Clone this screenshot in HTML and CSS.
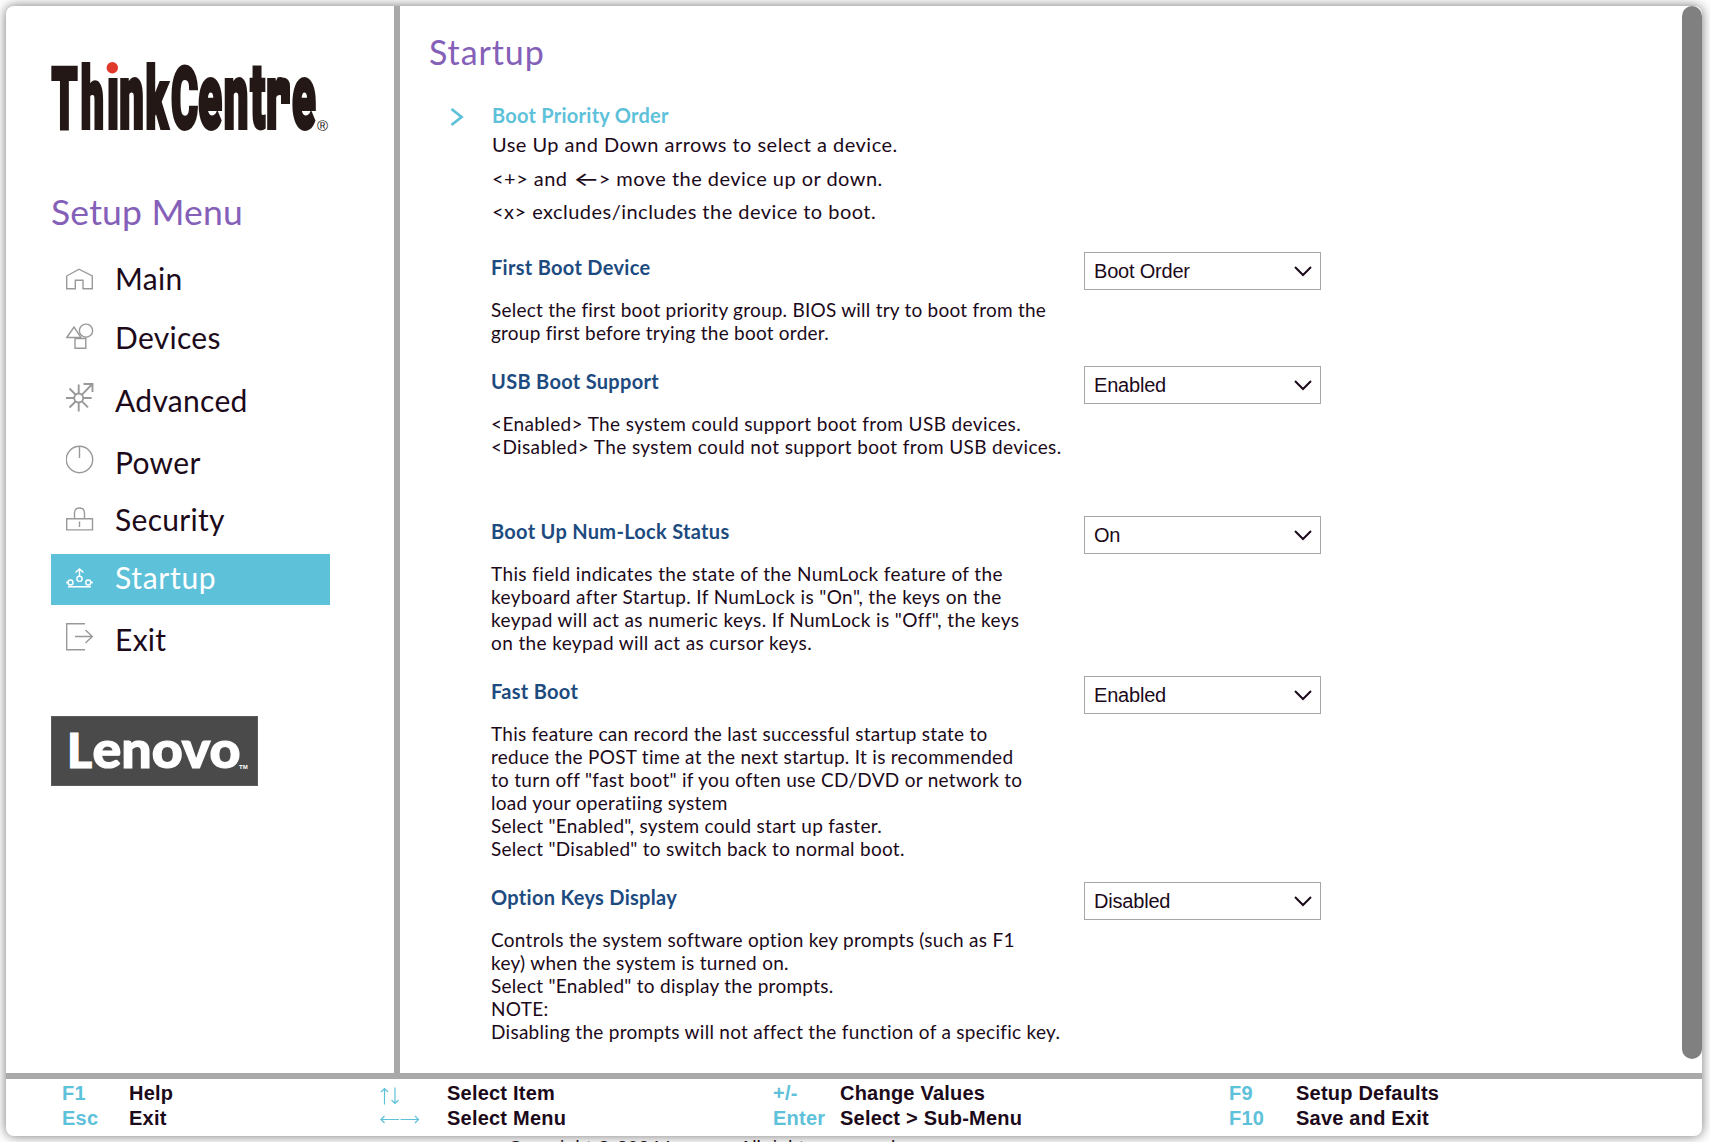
FILE: index.html
```html
<!DOCTYPE html>
<html lang="en">
<head>
<meta charset="utf-8">
<title>Setup - Startup</title>
<link rel="stylesheet" href="styles.css">
</head>
<body>
<div class="window">
  <div class="body">
    <aside class="sidebar">
      <svg class="brand" width="280" height="72" viewBox="0 0 280 72" role="img" aria-label="ThinkCentre">
        <text class="brand-word" transform="translate(0 65.800) scale(.48 1)" x="1 62 116 142 197 250 307 360 415 448 502"><tspan class="cap">Th</tspan><tspan class="low">ın</tspan><tspan class="cap">kC</tspan><tspan class="low">entre</tspan></text>
        <path d="M226 15.500h5q8 0 8 9V42h-9V25z" fill="#231815"/>
        <circle cx="61.3" cy="5.800" r="5.700" fill="#e0382b"/>
        <text class="brand-reg" x="266" y="68.500">®</text>
      </svg>
      <h2 class="menu-title">Setup Menu</h2>
      <nav class="menu">
        <a class="item"><svg class="icon" width="28" height="22" viewBox="0 0 28 22"><path d="M.7 8 13 1.2 26.3 8v12.7H17v-8.5H9.300v8.500H.7z"/></svg><span>Main</span></a>
        <a class="item"><svg class="icon" width="28" height="26" viewBox="0 0 28 26"><path d="M.8 14.500 8 4l7 10.500zM9 15.500h10.800v9.700H9z"/><circle cx="20" cy="7.700" r="6.600"/></svg><span>Devices</span></a>
        <a class="item tall"><svg class="icon bold" width="28" height="29" viewBox="0 0 28 29"><circle cx="12.700" cy="15" r="4.500"/><path d="M12.700 1.500v9M12.700 19.500v9M0 15h8M17.200 15h8.500M3.500 5.500l6 6M3.500 24.500l6-6M16 18.300l6 6M16 11.700 26.300 1M17.500 1h9v8"/></svg><span>Advanced</span></a>
        <a class="item mid"><svg class="icon" width="28" height="29" viewBox="0 0 28 29"><circle cx="13.500" cy="14.500" r="13.200"/><path d="M13.500 1.500V13"/></svg><span>Power</span></a>
        <a class="item short"><svg class="icon" width="28" height="24" viewBox="0 0 28 24"><path d="M.7 11.700h25.800v11.200H.7zM8.500 11.500V6q0-5 5-5t5 5v5.500M13.500 14.500v5.500"/></svg><span>Security</span></a>
        <a class="item active"><svg class="icon" width="28" height="21" viewBox="0 0 28 21"><circle cx="4.500" cy="14.500" r="2.500"/><circle cx="22.300" cy="14.500" r="2.500"/><circle cx="13.500" cy="10.800" r="2.600"/><path d="M13.500 8V1M9.500 4.500l4-3.500 4 3.500M0 14.500h2M25 14.500h2M2 18.800h23"/></svg><span>Startup</span></a>
        <a class="item"><svg class="icon" width="28" height="29" viewBox="0 0 28 29"><path d="M19 1.700H.7v26H19M9 14.500h17M19.500 8l6.800 6.500-6.800 6.500"/></svg><span>Exit</span></a>
      </nav>
      <svg class="lenovo" width="207" height="70" viewBox="0 0 207 70" role="img" aria-label="Lenovo">
        <rect x=".5" y=".5" width="206" height="69" fill="#4a4a4a" stroke="#5c5c5c"/>
        <text class="lenovo-word" x="16" y="51.600" font-size="48">L</text>
        <text class="lenovo-word" x="41.500" y="51.600" font-size="52" textLength="148" lengthAdjust="spacingAndGlyphs">enovo</text>
        <text class="lenovo-tm" x="188" y="53">TM</text>
      </svg>
    </aside>
    <main class="content">
      <h1 class="page-title">Startup</h1>
      <section class="priority">
        <svg class="chevron" width="14" height="20" viewBox="0 0 14 20"><path d="M1.500 2l10 8-10 8"/></svg>
        <div>
          <h3 class="link">Boot Priority Order</h3>
          <p class="hint">Use Up and Down arrows to select a device.<br>&lt;+&gt; and <span class="arrow">←</span>&gt; move the device up or down.<br>&lt;x&gt; excludes/includes the device to boot.</p>
        </div>
      </section>
      <section class="setting s1">
        <div><h3>First Boot Device</h3>
        <p class="tight">Select the first boot priority group. BIOS will try to boot from the<br>group first before trying the boot order.</p></div>
        <div class="select">Boot Order<svg width="18" height="11" viewBox="0 0 18 11"><path d="M1 1l8 8 8-8"/></svg></div>
      </section>
      <section class="setting s2">
        <div><h3>USB Boot Support</h3>
        <p class="loose">&lt;Enabled&gt; The system could support boot from USB devices.<br>&lt;Disabled&gt; The system could not support boot from USB devices.</p></div>
        <div class="select">Enabled<svg width="18" height="11" viewBox="0 0 18 11"><path d="M1 1l8 8 8-8"/></svg></div>
      </section>
      <section class="setting s3">
        <div><h3>Boot Up Num-Lock Status</h3>
        <p class="loose">This field indicates the state of the NumLock feature of the<br>keyboard after Startup. If NumLock is "On", the keys on the<br>keypad will act as numeric keys. If NumLock is "Off", the keys<br>on the keypad will act as cursor keys.</p></div>
        <div class="select">On<svg width="18" height="11" viewBox="0 0 18 11"><path d="M1 1l8 8 8-8"/></svg></div>
      </section>
      <section class="setting s4">
        <div><h3>Fast Boot</h3>
        <p>This feature can record the last successful startup state to<br>reduce the POST time at the next startup. It is recommended<br>to turn off "fast boot" if you often use CD/DVD or network to<br>load your operatiing system<br>Select "Enabled", system could start up faster.<br>Select "Disabled" to switch back to normal boot.</p></div>
        <div class="select">Enabled<svg width="18" height="11" viewBox="0 0 18 11"><path d="M1 1l8 8 8-8"/></svg></div>
      </section>
      <section class="setting">
        <div><h3>Option Keys Display</h3>
        <p>Controls the system software option key prompts (such as F1<br>key) when the system is turned on.<br>Select "Enabled" to display the prompts.<br>NOTE:<br>Disabling the prompts will not affect the function of a specific key.</p></div>
        <div class="select">Disabled<svg width="18" height="11" viewBox="0 0 18 11"><path d="M1 1l8 8 8-8"/></svg></div>
      </section>
    </main>
    <div class="scrollbar"><div class="thumb"></div></div>
  </div>
  <footer class="keys">
    <span class="key">F1</span><span>Help</span>
    <span class="key"><svg width="20" height="18" viewBox="0 0 20 18"><path d="M4.500 17.500V1.500M1 5l3.500-3.500L8 5M15 .5v16M11.500 13l3.500 3.500 3.500-3.500"/></svg></span><span>Select Item</span>
    <span class="key">+/-</span><span>Change Values</span>
    <span class="key">F9</span><span>Setup Defaults</span>
    <span class="key">Esc</span><span>Exit</span>
    <span class="key"><svg class="wide" width="40" height="9" viewBox="0 0 40 9"><path d="M19 4.500H1M4.500 1 1 4.500 4.500 8M20.500 4.500h18M35 1l3.500 3.500L35 8"/></svg></span><span>Select Menu</span>
    <span class="key">Enter</span><span>Select &gt; Sub-Menu</span>
    <span class="key">F10</span><span>Save and Exit</span>
  </footer>
</div>
<p class="copyright">Copyright © 2024 Lenovo. All rights reserved.</p>
</body>
</html>
```
FILE: styles.css
```css
* { box-sizing: border-box; margin: 0; padding: 0; }
html, body { height: 1142px; overflow: hidden; }
body {
  background: #fff;
  color: #1c0a1a;
  font-family: Lato, "Liberation Sans", sans-serif;
  padding: 6px 8px 0 6px;
}
svg { display: block; fill: none; }

.window {
  height: 1130px;
  display: flex;
  flex-direction: column;
  background: #fff;
  border-radius: 8px;
  box-shadow: 0 0 12px rgba(0, 0, 0, .55);
}
.body { height: 1067px; flex: none; display: flex; }

.sidebar {
  width: 394px;
  flex: none;
  padding: 56px 0 0 45px;
  border-right: 6px solid #a9a9a9;
}
.brand { overflow: visible; }
.brand-word { font-family: Roboto, sans-serif; font-weight: 900; fill: #231815; stroke: #231815; stroke-width: 3.800px; }
.cap { font-size: 86px; }
.low { font-size: 91px; }
.brand-reg { font: 15px "Liberation Sans", sans-serif; fill: #231815; }

.menu-title {
  margin-top: 56px;
  font-size: 35.500px;
  font-weight: 400;
  line-height: 44px;
  letter-spacing: .2px;
  color: #8560b8;
}
.menu { margin-top: 21px; }
.item {
  display: flex;
  align-items: baseline;
  width: 279px;
  height: 51px;
  padding: 5px 0 0 15px;
  margin-bottom: 8px;
  font-size: 30px;
  line-height: 37px;
  letter-spacing: .3px;
}
.item span { margin-left: 21px; }
.item:nth-child(2) { margin-bottom: 12px; }
.item.tall { margin-bottom: 11px; }
.item.mid { margin-bottom: 6px; }
.item.short { margin-bottom: 7px; }
.item.active { background: #5ec1da; color: #fff; margin-bottom: 11px; letter-spacing: .7px; }
.icon { stroke: #999; stroke-width: 1.400; flex: none; }
.icon.bold { stroke-width: 1.900; }
.active .icon { stroke: #fff; stroke-width: 1.400; }

.lenovo { margin-top: 49px; }
.lenovo-word { font-family: Lato, sans-serif; font-weight: 900; fill: #fff; stroke: #fff; stroke-width: 1.200px; }
.lenovo-tm { font: bold 6px "Liberation Sans", sans-serif; fill: #fff; }

.content { flex: 1; padding: 24px 0 0 29px; }
.page-title {
  font-size: 34px;
  font-weight: 400;
  line-height: 44px;
  letter-spacing: .9px;
  color: #8560b8;
}
.priority { display: flex; height: 148px; padding: 29px 0 0 21px; }
.chevron { margin: 4px 28px 0 0; stroke: #5ec1da; stroke-width: 2.800; }
.link { font-size: 20px; line-height: 24px; letter-spacing: .25px; color: #5ec1da; }
.hint { font-size: 20px; line-height: 33.500px; letter-spacing: .47px; margin-top: 1px; }
.arrow { display: inline-block; font-family: Inter, sans-serif; font-size: 20px; line-height: 20px; transform: scaleX(1.400); margin: 0 2px 0 4px; }

.setting { display: grid; grid-template-columns: 593px 237px; margin-left: 62px; align-items: start; }
.s1 { height: 114px; margin-top: 30px; }
.s2 { height: 150px; }
.s3 { height: 160px; }
.s4 { height: 206px; }
.setting h3 { margin-top: 3px; font-size: 20px; line-height: 24px; letter-spacing: .3px; color: #1d4b80; }
.setting p { margin-top: 19px; font-size: 19px; line-height: 23px; letter-spacing: .28px; white-space: nowrap; }
.setting .tight { letter-spacing: .23px; }
.setting .loose { letter-spacing: .38px; }
.select {
  display: flex;
  align-items: center;
  justify-content: space-between;
  height: 38px;
  padding: 0 8px 0 9px;
  border: 1px solid #a6a6a6;
  font: 20px "Liberation Sans", Arial, sans-serif;
  letter-spacing: -.2px;
}
.select svg { stroke: #1c0a1a; stroke-width: 2; margin-top: 1px; }

.scrollbar { width: 20px; }
.thumb { height: 1053px; border-radius: 10px; background: #808080; }

.keys {
  height: 63px;
  display: grid;
  grid-template-columns: 67px 251px 67px 326px 67px 389px 67px 1fr;
  grid-auto-rows: 25px;
  padding: 2px 0 0 56px;
  border-top: 6px solid #a9a9a9;
  font: bold 20px/25px "Liberation Sans", Arial, sans-serif;
  letter-spacing: .22px;
  white-space: nowrap;
}
.key { color: #5ec1da; }
.key svg { stroke: #5ec1da; stroke-width: 1.200; margin-top: 6px; }
.key svg.wide { margin-top: 9px; }

.copyright {
  margin: 1px 0 0 502px;
  font: 19.500px/23px "Liberation Sans", Arial, sans-serif;
}
```
